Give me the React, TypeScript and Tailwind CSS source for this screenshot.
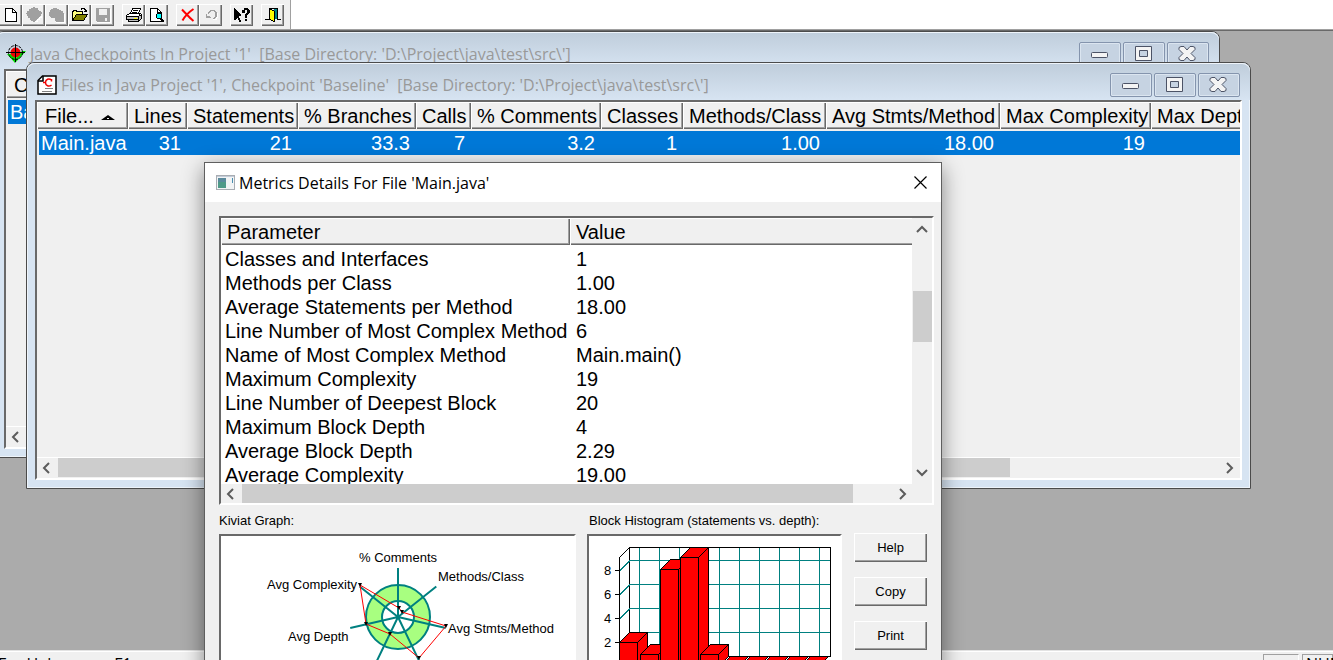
import type { ReactNode } from "react";
import { clsx } from "clsx";

const UI = "font-['Open_Sans','Noto_Sans',sans-serif]";
const ARIAL = "font-['Liberation_Sans',Arial,sans-serif]";

type Column = { name: string; width: number; value: string };

const fileColumns: Column[] = [
  { name: "File...", width: 91, value: "Main.java" },
  { name: "Lines", width: 59, value: "31" },
  { name: "Statements", width: 111, value: "21" },
  { name: "% Branches", width: 118, value: "33.3" },
  { name: "Calls", width: 55, value: "7" },
  { name: "% Comments", width: 130, value: "3.2" },
  { name: "Classes", width: 82, value: "1" },
  { name: "Methods/Class", width: 143, value: "1.00" },
  { name: "Avg Stmts/Method", width: 174, value: "18.00" },
  { name: "Max Complexity", width: 151, value: "19" },
  { name: "Max Depth", width: 112, value: "" },
];

const checkpointColumns: Column[] = [
  { name: "Checkpoint", width: 160, value: "Baseline" },
];

const metrics = [
  ["Classes and Interfaces", "1"],
  ["Methods per Class", "1.00"],
  ["Average Statements per Method", "18.00"],
  ["Line Number of Most Complex Method", "6"],
  ["Name of Most Complex Method", "Main.main()"],
  ["Maximum Complexity", "19"],
  ["Line Number of Deepest Block", "20"],
  ["Maximum Block Depth", "4"],
  ["Average Block Depth", "2.29"],
  ["Average Complexity", "19.00"],
];

function PixelIcon({ children }: { children: ReactNode }) {
  return (
    <svg width="16" height="16" viewBox="0 0 16 16" shapeRendering="crispEdges" aria-hidden="true">
      {children}
    </svg>
  );
}

const toolbar: { label: string; icon: ReactNode }[][] = [
  [
    {
      label: "New",
      icon: (
        <PixelIcon>
          <path d="M2.500 1.500h7l4 4v9h-11z" fill="#fff" stroke="#000" />
          <path d="M9.500 1.500v4h4" fill="none" stroke="#000" />
        </PixelIcon>
      ),
    },
    {
      label: "Checkpoint",
      icon: (
        <PixelIcon>
          <path d="M7 0h2v1h3v2h1v1h2v1h1v2h-1v2h-1v2h-2v2h-2v1H9v1H7v-1H5v-1H4v-2H2v-2H1V7H0V6h1V4h2V2h2V1h2z" fill="#a0a0a0" />
          <path d="M9 14.500h2v-2h2v-2h2v-2" fill="none" stroke="#fff" />
        </PixelIcon>
      ),
    },
    {
      label: "Checkpoints",
      icon: (
        <PixelIcon>
          <path d="M2 2h2V1h4v1h2v1h2v1h2v2h1v9H7v-1H6v-3H2v-1H1V9H0V5h1V3h1z" fill="#a0a0a0" />
          <path d="M7 15.500h8.500V7" fill="none" stroke="#fff" />
        </PixelIcon>
      ),
    },
    {
      label: "Open",
      icon: (
        <PixelIcon>
          <path d="M0.500 13.500v-9h1v-1h3v1h6v3" fill="#ffff80" stroke="#000" />
          <path d="M0.500 13.500l4-6h11l-4 6z" fill="#808000" stroke="#000" />
          <path d="M8.500 2.500h1v-1h3v1h1v2m-2 0h3m0-2v2" fill="none" stroke="#000" />
        </PixelIcon>
      ),
    },
    {
      label: "Save",
      icon: (
        <PixelIcon>
          <path d="M1 1h14v14H2l-1-1z" fill="#a0a0a0" />
          <path d="M4 2h8v6H4zM10 11h2v3h-2z" fill="#f0f0f0" />
          <path d="M2 15.500h13.500V2" fill="none" stroke="#fff" />
        </PixelIcon>
      ),
    },
  ],
  [
    {
      label: "Print",
      icon: (
        <PixelIcon>
          <path d="M4.500 6.500l2-5h8l-2 5z" fill="#fff" stroke="#000" />
          <path d="M7 3.500h5M6 5.500h5" stroke="#000" />
          <path d="M0.500 8.500l3-2h11l-2 3h-12z" fill="#fff" stroke="#000" />
          <path d="M0.500 9.500h12v3h-12zM2.500 12.500h10v2h-10zM12.500 9.500l3-2v4l-3 3z" fill="#c0c0c0" stroke="#000" />
          <path d="M8 11h3v1H8z" fill="#ffff00" />
        </PixelIcon>
      ),
    },
    {
      label: "Print preview",
      icon: (
        <PixelIcon>
          <path d="M1.500 1.500h7l4 4v9h-11z" fill="#fff" stroke="#000" />
          <path d="M8.500 1.500v4h4" fill="none" stroke="#000" />
          <path d="M8.500 6.500h3l1 1v3l-1 1h-3l-1-1v-3z" fill="#00ffff" stroke="#000" />
          <path d="M12 11h1v1h1v1h1v2h-2v-1h-1v-1h-1v-2z" fill="#000" />
        </PixelIcon>
      ),
    },
  ],
  [
    {
      label: "Delete",
      icon: (
        <svg width="16" height="16" viewBox="0 0 16 16" aria-hidden="true">
          <path d="M2 2.500c4 4 7 8 11.500 11.500M13.500 2C9 5 5 9 2.500 13.500" stroke="#ff0000" strokeWidth="2" fill="none" />
        </svg>
      ),
    },
    {
      label: "Undo",
      icon: (
        <PixelIcon>
          <path d="M3 7h1v2h3v1h1v1H3zM5 5h1V4h1V3h5v1h1v1h1v5h-1v1h-1v1h-2v-1h1v-1h1V5h-1V4H8v1H7v1H6v1H5z" fill="#a0a0a0" />
          <path d="M10 12.500h3v-2h1.500V6" fill="none" stroke="#fff" />
        </PixelIcon>
      ),
    },
  ],
  [
    {
      label: "Help pointer",
      icon: (
        <PixelIcon>
          <path d="M0 1h1v1h1v1h1v1h1v1h1v1h1v1h1v2H5v2h1v2h1v2H5v-2H4v-2H3v1H2v1H0z" fill="#000" />
          <path d="M8 3h2V1h4v1h1v1h1v3h-1v1h-1v1h-1v3h-2V7h1V6h1V3h-2v3H8zM11 12h2v2h-2z" fill="#000" />
        </PixelIcon>
      ),
    },
  ],
  [
    {
      label: "Exit",
      icon: (
        <PixelIcon>
          <path d="M0 12.500h4.500v-11h8v11H16" fill="none" stroke="#000" />
          <path d="M9 2h3v10H9z" fill="#008080" />
          <path d="M4.500 1.500l5 3v10l-5-2z" fill="#ffff00" stroke="#000" />
        </PixelIcon>
      ),
    },
  ],
];

function CheckpointIcon() {
  return (
    <svg width="20" height="20" viewBox="0 0 20 20" className="shrink-0" aria-hidden="true">
      <path d="M1 10l8 9 11-12-4 0-6 7-5-4z" fill="#00e000" />
      <circle cx="9.500" cy="8.500" r="7" fill="none" stroke="#000" strokeDasharray="3 1" />
      <circle cx="9.500" cy="8.500" r="5" fill="#f00000" />
      <path d="M9.500 0v18M0 8.500h19" stroke="#000" />
    </svg>
  );
}

function FileIcon() {
  return (
    <svg width="20" height="20" viewBox="0 0 20 20" className="shrink-0" aria-hidden="true">
      <path d="M5.500 1h13.500v18H1V5.500z" fill="#fff" stroke="#000" strokeWidth="1.500" />
      <path d="M1 6h5V1" fill="none" stroke="#000" strokeWidth="1.500" />
      <path d="M14.500 6.500V4M14.500 5C12 3 8.500 4 8.500 7.500s3.500 4.500 6 2.500M6 7.500h2" fill="none" stroke="#f00000" strokeWidth="1.500" />
      <path d="M8 13.500h8M5 16.500h10" stroke="#808080" />
    </svg>
  );
}

const chevrons = {
  left: "M9 2L4 7l5 5",
  right: "M5 2l5 5-5 5",
  up: "M2 9l5-5 5 5",
  down: "M2 5l5 5 5-5",
};

function Arrow({ dir }: { dir: keyof typeof chevrons }) {
  return (
    <button type="button" aria-label={`Scroll ${dir}`} className="flex size-5 shrink-0 items-center justify-center">
      <svg width="14" height="14" viewBox="0 0 14 14" aria-hidden="true">
        <path d={chevrons[dir]} fill="none" stroke="#5c5c5c" strokeWidth="2" />
      </svg>
    </button>
  );
}

function HeaderCell({ children, width, className }: { children: ReactNode; width?: number; className?: string }) {
  return (
    <th
      scope="col"
      style={{ width }}
      className={clsx(
        "h-[27px] overflow-hidden bg-[#f0f0f0] p-0 text-left font-normal whitespace-nowrap",
        className,
      )}
    >
      {children}
    </th>
  );
}

const RAISED = "shadow-[inset_1px_1px_#fff,inset_-1px_-1px_#696969,inset_-2px_-2px_#a0a0a0]";
const SUNKEN = "border-2 border-t-[#696969] border-r-white border-b-white border-l-[#696969]";

function CaptionButton({ label, children }: { label: string; children: ReactNode }) {
  return (
    <button
      type="button"
      aria-label={label}
      className="flex h-6 w-[42px] items-center justify-center rounded-xs border border-[#8494ad] bg-[#c6d3e2] shadow-[inset_0_0_0_1px_#dbe5f0]"
    >
      <svg width="20" height="18" viewBox="0 0 20 18" fill="#f4f4f4" stroke="#4c5366" aria-hidden="true">
        {children}
      </svg>
    </button>
  );
}

type ChildWindowProps = {
  title: string;
  icon: ReactNode;
  columns: Column[];
  className: string;
};

function ChildWindow({ title, icon, columns, className }: ChildWindowProps) {
  const total = columns.reduce((sum, c) => sum + c.width, 0);
  return (
    <section
      className={clsx(
        "absolute flex h-[427px] w-[1225px] flex-col rounded-t-lg border border-[#4b4b4b] bg-[#d7e4f2] px-2 pb-2 shadow-[inset_0_0_0_1px_#eef4fa]",
        className,
      )}
    >
      <header className="-mx-2 flex h-[37px] shrink-0 items-center gap-1 rounded-t-lg bg-linear-to-b from-[#bfcddb] to-[#d7e4f2] px-2.5 pt-[7px] shadow-[inset_0_1px_#eef4fa]">
        {icon}
        <h2 className={clsx(UI, "flex-1 text-base whitespace-pre text-[#999]")}>{title}</h2>
        <div className="flex gap-0.5">
          <CaptionButton label="Minimize">
            <rect x="1.500" y="7.500" width="16" height="5" rx="1" />
          </CaptionButton>
          <CaptionButton label="Maximize">
            <path d="M1.500 1.500h16v14h-16zM5.500 5.500v6h8v-6z" fillRule="evenodd" />
          </CaptionButton>
          <CaptionButton label="Close">
            <path d="M1 2.500l2-1h3l3 3.500 3-3.500h3l2 1v2L13 8.500l4 4v2l-2 1h-3l-3-3.500-3 3.500H3l-2-1v-2l4-4-4-4z" />
          </CaptionButton>
        </div>
      </header>
      <div className={clsx(SUNKEN, "flex min-h-0 flex-1 flex-col bg-[#f0f0f0]")}>
        <div className="min-h-0 flex-1 overflow-hidden">
          <table style={{ width: total }} className={clsx(ARIAL, "table-fixed border-separate border-spacing-0 text-xl leading-6")}>
            <thead>
              <tr>
                {columns.map((c, i) => (
                  <HeaderCell key={c.name} width={c.width} className={clsx(RAISED, i === 0 ? "pl-2" : "pl-1.5")}>
                    {c.name}
                    {c.name === "File..." && (
                      <svg width="16" height="7" viewBox="0 0 16 7" className="ml-1.5 inline-block align-middle" aria-hidden="true">
                        <path d="M1 6L8 1l7 5z" />
                        <path d="M7 4.500h2" stroke="#f0f0f0" />
                      </svg>
                    )}
                  </HeaderCell>
                ))}
              </tr>
            </thead>
            <tbody>
              <tr className="h-0.5" aria-hidden="true" />
              <tr className="bg-[#0078d7] text-white">
                {columns.map((c, i) => (
                  <td
                    key={c.name}
                    className={clsx("h-6 p-0", i === 0 ? "border-l-2 border-[#f0f0f0] pl-0.5 text-left" : "pr-1.5 text-right")}
                  >
                    {c.value}
                  </td>
                ))}
              </tr>
            </tbody>
          </table>
        </div>
        <div className="flex h-[21px] border-t border-white pr-px">
          <Arrow dir="left" />
          <div className="flex-1 pl-px">
            <div className="h-[19px] w-[82%] bg-[#cdcdcd]" />
          </div>
          <Arrow dir="right" />
        </div>
      </div>
    </section>
  );
}

const markers = [
  [178, 72],
  [181, 76],
  [225, 90],
  [198, 122],
  [169, 98],
  [145, 88],
  [139, 49],
];

function KiviatGraph() {
  const spokes = Array.from({ length: 7 }, (_, i) => {
    const a = (i * 2 * Math.PI) / 7;
    return `M177 81L${177 + 49 * Math.sin(a)} ${81 - 49 * Math.cos(a)}`;
  }).join("");
  return (
    <svg width="353" height="200" viewBox="0 0 353 200" className={clsx(ARIAL, "text-[13px]")} role="img" aria-label="Kiviat graph">
      <circle cx="177" cy="81" r="32" fill="#a8ff80" stroke="#008080" strokeWidth="2" />
      <circle cx="177" cy="81" r="16" fill="#fff" stroke="#008080" strokeWidth="2" />
      <path d={spokes} stroke="#008080" strokeWidth="2" />
      <polygon points={markers.map((m) => m.join()).join(" ")} fill="none" stroke="#f00" />
      {markers.map(([x, y]) => (
        <path key={x} d={`M${x - 2} ${y - 2}h4l-2 4z`} />
      ))}
      <text x="138" y="26">% Comments</text>
      <text x="217" y="45">Methods/Class</text>
      <text x="227" y="97">Avg Stmts/Method</text>
      <text x="46" y="53">Avg Complexity</text>
      <text x="67" y="105">Avg Depth</text>
    </svg>
  );
}

function Histogram() {
  const bars = [106.5, 118.5, 33.5, 21.5, 118.5, 130.5, 130.5, 130.5, 130.5, 130.5];
  const columnLines = bars.map((_, i) => `M${50.5 + i * 20} 12v108`).join("");
  const rowLines = [34.5, 58.5, 82.5, 106.5].map((y) => `M31 ${y}l10-10h200`).join("");
  return (
    <svg
      width="251"
      height="200"
      viewBox="0 0 251 200"
      shapeRendering="crispEdges"
      className={clsx(ARIAL, "text-[13px]")}
      role="img"
      aria-label="Block histogram"
    >
      <path d="M30.500 130.500v-109l10-10h201v109M40.500 11.500v109h201" fill="none" stroke="#000" />
      <path d={columnLines + rowLines} fill="none" stroke="#008080" />
      {[8, 6, 4, 2].map((n, i) => (
        <g key={n}>
          <path d={`M26 ${34.5 + i * 24}h5`} stroke="#000" />
          <text x="15" y={39 + i * 24}>{n}</text>
        </g>
      ))}
      {bars.map((top, i) => {
        const x = (i === 0 ? 30.5 : 31.5) + i * 20;
        return (
          <g key={i} fill="#f00" stroke="#000">
            <path d={`M${x} ${top}l10-10h18l-10 10z`} />
            <path d={`M${x + 18} ${top}l10-10V120.500l-10 10z`} />
            <path d={`M${x} ${top}h18V130.500h-18z`} />
          </g>
        );
      })}
    </svg>
  );
}

function MetricsDialog() {
  return (
    <section
      role="dialog"
      aria-labelledby="metrics-title"
      className="absolute top-[131px] left-[204px] w-[738px] border border-[#5f5f5f] bg-[#f0f0f0] shadow-[0_6px_20px_rgba(0,0,0,0.45)]"
    >
      <header className="flex h-[39px] items-center bg-white pr-3.5 pl-[11px]">
        <svg width="19" height="15" viewBox="0 0 19 15" aria-hidden="true">
          <rect x="0.500" y="0.500" width="18" height="14" fill="#f2f4f5" stroke="#a9adb3" />
          <path d="M1 1h17v1H1z" fill="#c3ccd8" />
          <path d="M2 3h8v10H2z" fill="#4f9a88" />
          <path d="M2 3h8v4H2z" fill="#5a8a9c" />
          <path d="M16 3h1v5h-1z" fill="#4a8fb0" />
        </svg>
        <h2 id="metrics-title" className={clsx(UI, "ml-1 flex-1 text-base")}>
          Metrics Details For File 'Main.java'
        </h2>
        <button type="button" aria-label="Close">
          <svg width="13" height="13" viewBox="0 0 13 13" aria-hidden="true">
            <path d="M0.500 0.500l12 12M12.500 0.500l-12 12" stroke="#000" strokeWidth="1.200" />
          </svg>
        </button>
      </header>

      <div className={clsx(ARIAL, "pt-3.5 pr-[7px] pl-3.5 text-[13px]")}>
        <div className={clsx(SUNKEN, "flex h-[289px] flex-col")}>
          <div className="flex min-h-0 flex-1">
            <div className="min-w-0 flex-1 overflow-hidden bg-white">
              <table className="w-full table-fixed border-separate border-spacing-0 text-xl leading-6">
                <thead>
                  <tr>
                    <HeaderCell width={349} className={clsx(RAISED, "pl-1.5")}>Parameter</HeaderCell>
                    <HeaderCell className="pl-1.5 shadow-[inset_1px_1px_#fff,inset_0_-1px_#696969,inset_0_-2px_#a0a0a0]">
                      Value
                    </HeaderCell>
                  </tr>
                </thead>
                <tbody>
                  <tr className="h-0.5" aria-hidden="true" />
                  {metrics.map(([name, value]) => (
                    <tr key={name}>
                      <td className="h-6 p-0 pl-1 whitespace-nowrap">{name}</td>
                      <td className="h-6 p-0 pl-1.5">{value}</td>
                    </tr>
                  ))}
                </tbody>
              </table>
            </div>
            <div className="flex w-5 flex-col py-0.5">
              <Arrow dir="up" />
              <div className="flex-1 pt-[51px] pl-px">
                <div className="h-[51px] bg-[#cdcdcd]" />
              </div>
              <Arrow dir="down" />
            </div>
          </div>
          <div className="flex h-[19px] pr-5">
            <Arrow dir="left" />
            <div className="flex-1 pl-px">
              <div className="h-[19px] w-[94%] bg-[#cdcdcd]" />
            </div>
            <Arrow dir="right" />
          </div>
        </div>

        <div className="flex pt-2">
          <figure className="w-[357px]">
            <figcaption className="h-[21px] leading-4">Kiviat Graph:</figcaption>
            <div className={clsx(SUNKEN, "bg-white")}>
              <KiviatGraph />
            </div>
          </figure>
          <figure className="ml-[11px] w-[255px]">
            <figcaption className="h-[21px] pl-0.5 leading-4 whitespace-nowrap">Block Histogram (statements vs. depth):</figcaption>
            <div className={clsx(SUNKEN, "bg-white")}>
              <Histogram />
            </div>
          </figure>
          <div className="ml-3 flex flex-col gap-[15px] pt-5">
            {["Help", "Copy", "Print"].map((label) => (
              <button key={label} type="button" className={clsx(RAISED, "h-[29px] w-[73px] bg-[#f0f0f0]")}>
                {label}
              </button>
            ))}
          </div>
        </div>
      </div>
    </section>
  );
}

export default function App() {
  return (
    <main className="flex h-screen flex-col overflow-hidden bg-[#f0f0f0] text-black">
      <div className="flex h-[31px] shrink-0 border-b border-[#696969] bg-white shadow-[inset_0_-1px_#a0a0a0]">
        <div className="mb-px -ml-px flex items-start gap-2 border-r border-[#a0a0a0] bg-[#f0f0f0] pt-1 pr-1.5">
          {toolbar.map((group) => (
            <div key={group[0].label} className="flex">
              {group.map(({ label, icon }) => (
                <button
                  key={label}
                  type="button"
                  aria-label={label}
                  className={clsx(RAISED, "flex h-[22px] w-[23px] items-center justify-center")}
                >
                  {icon}
                </button>
              ))}
            </div>
          ))}
        </div>
      </div>

      <div className="relative min-h-0 flex-1 bg-[#ababab]">
        <ChildWindow
          title="Java Checkpoints In Project '1'  [Base Directory: 'D:\Project\java\test\src\']"
          icon={<CheckpointIcon />}
          columns={checkpointColumns}
          className="top-0 -left-[5px]"
        />
        <ChildWindow
          title="Files in Java Project '1', Checkpoint 'Baseline'  [Base Directory: 'D:\Project\java\test\src\']"
          icon={<FileIcon />}
          columns={fileColumns}
          className="top-[31px] left-[26px]"
        />
        <MetricsDialog />
      </div>

      <footer className={clsx(UI, "flex h-2.5 shrink-0 gap-[3px] overflow-hidden border-t border-[#e3e3e3] text-base leading-5 shadow-[inset_0_1px_#fff]")}>
        <span className="-ml-0.5 flex-1 pt-[3px]">For Help, press F1</span>
        <span className="mt-[3px] h-5 w-9 border border-[#a0a0a0] border-r-white" />
        <span className="mt-[3px] h-6 w-[31px] border border-[#a0a0a0] pl-[3px] leading-[18px]">NUM</span>
      </footer>
    </main>
  );
}
